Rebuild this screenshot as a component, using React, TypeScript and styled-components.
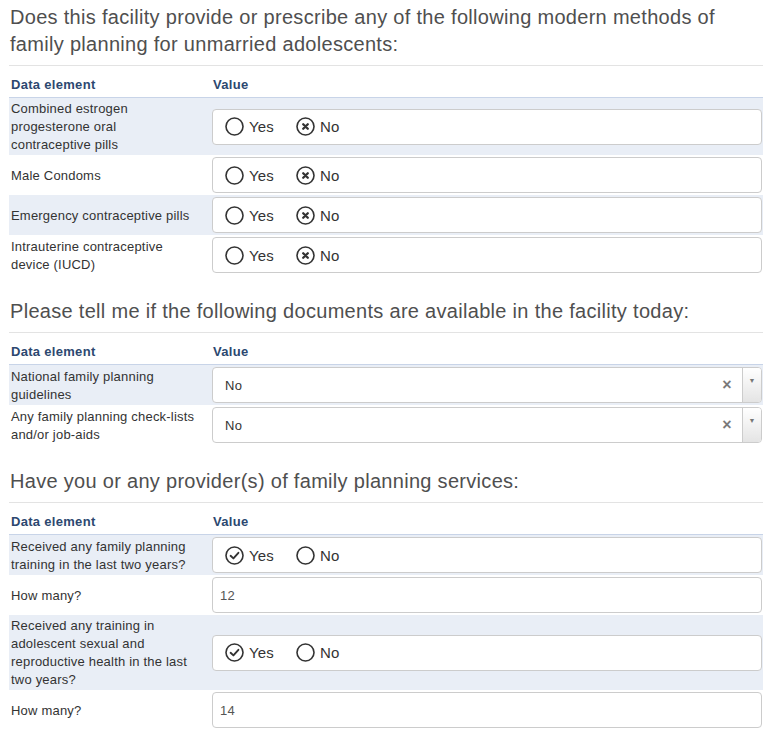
import React from 'react';
import styled, { createGlobalStyle } from 'styled-components';

const GlobalStyle = createGlobalStyle`
  body {
    margin: 0;
    background: #fff;
    font-family: "Liberation Sans", Arial, sans-serif;
  }
`;

type Choice = 'yes' | 'no' | null;

type Field =
  | { kind: 'radio'; label: string; value: Choice; pick: 'x' | 'check' }
  | { kind: 'select'; label: string; value: string }
  | { kind: 'text'; label: string; value: string };

type Section = { title: string; fields: Field[] };

const sections: Section[] = [
  {
    title:
      'Does this facility provide or prescribe any of the following modern methods of family planning for unmarried adolescents:',
    fields: [
      { kind: 'radio', label: 'Combined estrogen progesterone oral contraceptive pills', value: 'no', pick: 'x' },
      { kind: 'radio', label: 'Male Condoms', value: 'no', pick: 'x' },
      { kind: 'radio', label: 'Emergency contraceptive pills', value: 'no', pick: 'x' },
      { kind: 'radio', label: 'Intrauterine contraceptive device (IUCD)', value: 'no', pick: 'x' },
    ],
  },
  {
    title: 'Please tell me if the following documents are available in the facility today:',
    fields: [
      { kind: 'select', label: 'National family planning guidelines', value: 'No' },
      { kind: 'select', label: 'Any family planning check-lists and/or job-aids', value: 'No' },
    ],
  },
  {
    title: 'Have you or any provider(s) of family planning services:',
    fields: [
      { kind: 'radio', label: 'Received any family planning training in the last two years?', value: 'yes', pick: 'check' },
      { kind: 'text', label: 'How many?', value: '12' },
      {
        kind: 'radio',
        label: 'Received any training in adolescent sexual and reproductive health in the last two years?',
        value: 'yes',
        pick: 'check',
      },
      { kind: 'text', label: 'How many?', value: '14' },
    ],
  },
];

const Page = styled.div`
  padding: 4px 10px 10px 9px;
  width: 754px;
`;

const SectionBlock = styled.section`
  & + & {
    margin-top: 23px;
  }
`;

const Title = styled.h2`
  margin: 0;
  padding: 0 0 7px 1px;
  font-size: 20px;
  line-height: 27px;
  font-weight: normal;
  letter-spacing: 0.3px;
  color: #4f4f4f;
  border-bottom: 1px solid #e3e3e3;
`;

const Table = styled.table`
  width: 100%;
  border-collapse: collapse;
  table-layout: fixed;
`;

const HeadCell = styled.th`
  text-align: left;
  font-size: 13px;
  font-weight: bold;
  letter-spacing: 0.3px;
  color: #2c4870;
  padding: 11px 2px 5px 2px;
  line-height: 15px;
  border-bottom: 1px solid #c8d4e8;
  &:first-child {
    width: 186px;
    padding-right: 12px;
  }
  &:last-child {
    padding-left: 4px;
  }
`;

const Row = styled.tr<{ $shade: boolean }>`
  background: ${(p) => (p.$shade ? '#e9eef6' : '#fff')};
`;

const LabelCell = styled.td`
  font-size: 13px;
  line-height: 18px;
  letter-spacing: 0.2px;
  color: #333;
  padding: 2px 12px 1px 2px;
  vertical-align: middle;
`;

const ValueCell = styled.td`
  padding: 2px 1px 2px 3px;
  vertical-align: middle;
`;

const Box = styled.div`
  height: 36px;
  box-sizing: border-box;
  border: 1px solid #cccccc;
  border-radius: 4px;
  background: #fff;
  display: flex;
  align-items: center;
`;

const RadioGroup = styled(Box)`
  padding-left: 12px;
  gap: 22px;
`;

const RadioOption = styled.label`
  display: flex;
  align-items: center;
  gap: 5px;
  font-size: 15px;
  letter-spacing: 0.2px;
  color: #333;
`;

const TextBox = styled(Box)`
  padding-left: 7px;
  font-size: 13px;
  letter-spacing: 0.3px;
  color: #555;
`;

const SelectBox = styled(Box)`
  overflow: hidden;
`;

const SelectValue = styled.span`
  flex: 1;
  padding-left: 12px;
  font-size: 13px;
  letter-spacing: 0.3px;
  color: #333;
`;

const Clear = styled.span`
  width: 30px;
  text-align: center;
  font-size: 16px;
  font-weight: bold;
  color: #7a7a7a;
`;

const ArrowPart = styled.span`
  align-self: stretch;
  width: 19px;
  border-left: 1px solid #ccc;
  background: linear-gradient(#ffffff, #e4e4e4);
  display: flex;
  justify-content: center;
  padding-top: 9px;
  box-sizing: border-box;
  font-size: 7px;
  color: #777;
`;

const RadioIcon: React.FC<{ mark: 'none' | 'x' | 'check' }> = ({ mark }) => (
  <svg width="19" height="19" viewBox="0 0 19 19">
    <circle cx="9.5" cy="9.5" r="8.5" fill="none" stroke="#333" strokeWidth="1.6" />
    {mark === 'x' && (
      <path d="M7.2 7.2 L11.8 11.8 M11.8 7.2 L7.2 11.8" stroke="#333" strokeWidth="2.3" strokeLinecap="round" />
    )}
    {mark === 'check' && (
      <path d="M5.6 9.8 L8.4 12.4 L13.4 6.8" fill="none" stroke="#333" strokeWidth="1.9" strokeLinecap="round" strokeLinejoin="round" />
    )}
  </svg>
);

const FieldValue: React.FC<{ field: Field }> = ({ field }) => {
  if (field.kind === 'radio') {
    return (
      <RadioGroup>
        <RadioOption>
          <RadioIcon mark={field.value === 'yes' ? field.pick : 'none'} />
          Yes
        </RadioOption>
        <RadioOption>
          <RadioIcon mark={field.value === 'no' ? field.pick : 'none'} />
          No
        </RadioOption>
      </RadioGroup>
    );
  }
  if (field.kind === 'select') {
    return (
      <SelectBox>
        <SelectValue>{field.value}</SelectValue>
        <Clear>×</Clear>
        <ArrowPart>▼</ArrowPart>
      </SelectBox>
    );
  }
  return <TextBox>{field.value}</TextBox>;
};

export default function App() {
  return (
    <Page>
      <GlobalStyle />
      {sections.map((s) => (
        <SectionBlock key={s.title}>
          <Title>{s.title}</Title>
          <Table>
            <thead>
              <tr>
                <HeadCell>Data element</HeadCell>
                <HeadCell>Value</HeadCell>
              </tr>
            </thead>
            <tbody>
              {s.fields.map((f, i) => (
                <Row key={i} $shade={i % 2 === 0}>
                  <LabelCell>{f.label}</LabelCell>
                  <ValueCell>
                    <FieldValue field={f} />
                  </ValueCell>
                </Row>
              ))}
            </tbody>
          </Table>
        </SectionBlock>
      ))}
    </Page>
  );
}
